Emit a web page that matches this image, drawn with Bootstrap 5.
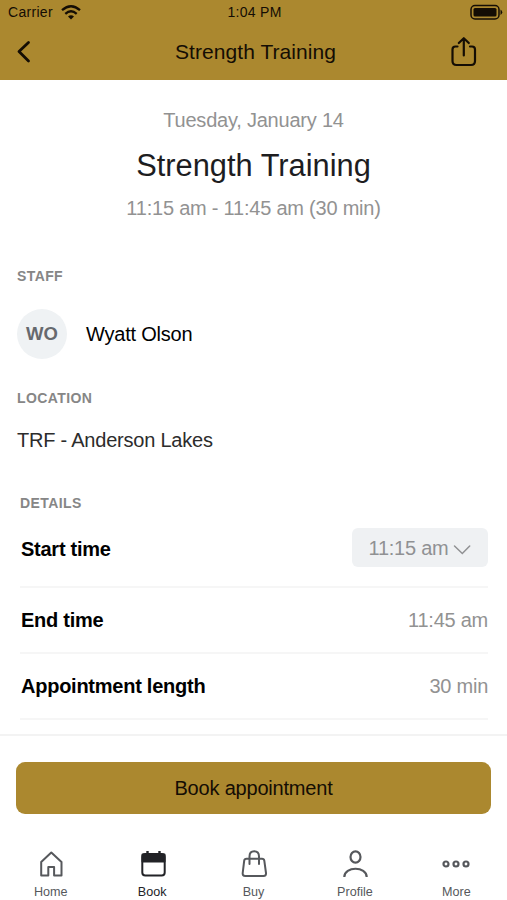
<!DOCTYPE html>
<html lang="en">
<head>
<meta charset="utf-8">
<meta name="viewport" content="width=device-width, initial-scale=1">
<title>Strength Training</title>
<link href="https://cdn.jsdelivr.net/npm/bootstrap@5.3.0/dist/css/bootstrap.min.css" rel="stylesheet">
<style>
:root { --gold: #ab882f; --ink: #140d04; --muted: #929292; }
body { font-family: "Liberation Sans", Arial, sans-serif; color: #000; height: 900px; overflow: hidden; background: #fff; }
svg { display: block; flex: none; }
.app-head { background: var(--gold); color: var(--ink); height: 80px; }
.status-bar { height: 24px; font-size: 14px; line-height: 24px; padding: 0 4px 0 8px; }
.status-bar > div { flex: 1 1 0; }
.carrier { letter-spacing: .3px; }
.clock { letter-spacing: .3px; padding-right: 2px; }
.title-bar { height: 56px; padding: 0 30px 0 16px; }
.title-bar > a { flex: 1 1 0; }
.title-bar h1 { font-size: 21px; line-height: 24px; letter-spacing: .07px; padding-left: 18px; }
.muted-text { color: var(--muted); }
.summary { padding-top: 28px; }
.summary p { font-size: 20px; line-height: 24px; letter-spacing: -.22px; }
.summary h2 { font-size: 30.8px; line-height: 36px; margin: 16px 0 12px; color: #1d1d1f; font-weight: 400; }
.section-label { font-size: 14px; line-height: 16px; font-weight: 700; letter-spacing: .4px; color: #868686; margin: 0; }
.staff, .place { padding-left: 17px; }
.staff { padding-top: 48px; }
.staff-row { margin-top: 25px; }
.avatar { width: 50px; height: 50px; background: #eff2f4; color: #66696e; font-size: 18.5px; font-weight: 700; }
.body-text { font-size: 20px; line-height: 24px; letter-spacing: -.22px; }
.person { margin-left: 19px; }
.place { padding-top: 31px; color: #2c2c2c; }
.place .body-text { margin-top: 22px; }
.details { padding: 43px 19px 0 20px; }
.detail-row { border-bottom: 2px solid #f6f6f6; font-size: 20px; line-height: 24px; letter-spacing: -.25px; height: 66px; }
.detail-row strong { padding-left: 1px; }
.detail-row.first { height: 77px; }
.detail-row.first strong { padding-top: 1px; }
.time-select { background: #eff1f3; border: 0; border-radius: 6px; height: 39px; width: 136px; color: #909193; font-size: 20px; letter-spacing: -.25px; padding: 1px 0 0; gap: 5px; margin-bottom: 2px; }
.time-select svg { margin-top: 3px; }
.app-foot { border-top: 2px solid #f3f3f3; height: 166px; padding-top: 26px; }
.book-btn, .book-btn:hover { background: var(--gold); color: var(--ink); height: 52px; border-radius: 9px; border: 0; font-size: 20px; letter-spacing: -.2px; }
.tabs { color: #56585c; font-size: 12.6px; line-height: 16px; padding-top: 34px; }
.tabs a { color: inherit; text-decoration: none; flex: 1 1 0; }
.tabs svg { margin-bottom: 4px; }
.tabs a.current { color: #222327; }
</style>
<script src="https://cdn.jsdelivr.net/npm/bootstrap@5.3.0/dist/js/bootstrap.bundle.min.js"></script>
</head>
<body class="d-flex flex-column">
<header class="app-head flex-shrink-0">
  <div class="status-bar d-flex align-items-center">
    <div class="d-flex align-items-center gap-2">
      <span class="carrier">Carrier</span>
      <svg width="20" height="15" viewBox="0 0 20 15" fill="none" stroke="currentColor" stroke-width="2.3"><path d="M1 5.2Q10-2.6 19 5.2M4.3 8.8Q10 3.8 15.700 8.800"/><path d="M7 11.400Q10 9 13 11.400L10 14.500Z" fill="currentColor" stroke="none"/></svg>
    </div>
    <span class="clock">1:04 PM</span>
    <div class="d-flex justify-content-end">
      <svg width="33" height="17" viewBox="0 0 33 17"><rect x="1" y="1.500" width="28" height="13.500" rx="4" fill="none" stroke="currentColor" stroke-width="1.500"/><rect x="3.500" y="4" width="23" height="8.500" rx="1.500" fill="currentColor"/><path d="M30.500 5.500Q34 8.200 30.500 11Z" fill="currentColor"/></svg>
    </div>
  </div>
  <div class="title-bar d-flex align-items-center">
    <a href="#" class="text-reset" aria-label="Back"><svg width="28" height="24" viewBox="0 0 28 24" fill="none" stroke="currentColor" stroke-width="2.800" stroke-linecap="round" stroke-linejoin="round"><path d="M12.500 2.500L3 11.500l9.500 9.500"/></svg></a>
    <h1 class="mb-0 fw-normal">Strength Training</h1>
    <a href="#" class="text-reset d-flex justify-content-end" aria-label="Share"><svg width="28" height="32" viewBox="0 0 28 32" fill="none" stroke="currentColor" stroke-width="2.200" stroke-linecap="round" stroke-linejoin="round"><path d="M8.500 10.500H6.500q-3 0-3 3v11.500q0 4 4 4h14.500q4 0 4-4V13.500q0-3-3-3h-2M14.800 19.500V2.500M9.800 7l5-4.800 5 4.800"/></svg></a>
  </div>
</header>
<main class="flex-grow-1 overflow-hidden">
  <section class="summary text-center">
    <p class="muted-text mb-0">Tuesday, January 14</p>
    <h2>Strength Training</h2>
    <p class="muted-text mb-0">11:15 am - 11:45 am (30 min)</p>
  </section>
  <section class="staff">
    <h3 class="section-label">STAFF</h3>
    <div class="d-flex align-items-center staff-row">
      <span class="avatar rounded-circle d-flex align-items-center justify-content-center">WO</span>
      <span class="body-text person">Wyatt Olson</span>
    </div>
  </section>
  <section class="place">
    <h3 class="section-label">LOCATION</h3>
    <p class="body-text mb-0">TRF - Anderson Lakes</p>
  </section>
  <section class="details">
    <h3 class="section-label">DETAILS</h3>
    <div class="detail-row first d-flex align-items-center justify-content-between">
      <strong>Start time</strong>
      <button class="time-select d-flex align-items-center justify-content-center" type="button"><span>11:15 am</span><svg width="18" height="12" viewBox="0 0 18 12" fill="none" stroke="currentColor" stroke-width="1.500" stroke-linecap="round"><path d="M1.500 2L9.300 9.500l7.400-7.500"/></svg></button>
    </div>
    <div class="detail-row d-flex align-items-center justify-content-between"><strong>End time</strong><span class="muted-text">11:45 am</span></div>
    <div class="detail-row d-flex align-items-center justify-content-between"><strong>Appointment length</strong><span class="muted-text">30 min</span></div>
  </section>
</main>
<footer class="app-foot flex-shrink-0">
  <div class="px-3"><button class="btn book-btn w-100" type="button">Book appointment</button></div>
  <nav class="tabs d-flex text-center">
    <a href="#"><svg class="mx-auto" width="28" height="32" viewBox="0 0 28 32" fill="none" stroke="currentColor" stroke-width="2" stroke-linejoin="round"><path d="M14.300 4.500L4.200 14v13.500h7.100V19h5.800v8.500H24.500V14Z"/></svg>Home</a>
    <a href="#" class="current"><svg class="mx-auto" width="28" height="32" viewBox="0 0 28 32" fill="none" stroke="currentColor" stroke-width="2"><rect x="4.300" y="6" width="22.400" height="21.500" rx="3"/><path d="M4.500 6.500h22v7h-22Z" fill="currentColor" stroke-linejoin="round"/><path d="M9.500 3v4M21.500 3v4" stroke-width="2.400"/></svg>Book</a>
    <a href="#"><svg class="mx-auto" width="28" height="32" viewBox="0 0 28 32" fill="none" stroke="currentColor" stroke-width="2" stroke-linecap="round" stroke-linejoin="round"><path d="M9.500 16V8.500Q9.500 3.300 14.200 3.300T19 8.500V16M6.500 10.700h15.500q2 0 2.300 2L26 25q.3 3-2.500 3H5.200q-2.800 0-2.500-3L4.200 12.700Q4.500 10.700 6.500 10.700Z"/></svg>Buy</a>
    <a href="#"><svg class="mx-auto" width="28" height="32" viewBox="0 0 28 32" fill="none" stroke="currentColor" stroke-width="2.200"><ellipse cx="14.500" cy="9" rx="5" ry="5.600"/><path d="M3.300 29C3.300 18 25.700 18 25.700 29"/></svg>Profile</a>
    <a href="#"><svg class="mx-auto" width="28" height="32" viewBox="0 0 28 32" fill="none" stroke="currentColor" stroke-width="2.200"><circle cx="4" cy="16" r="2.500"/><circle cx="14" cy="16" r="2.500"/><circle cx="24" cy="16" r="2.500"/></svg>More</a>
  </nav>
</footer>
</body>
</html>
